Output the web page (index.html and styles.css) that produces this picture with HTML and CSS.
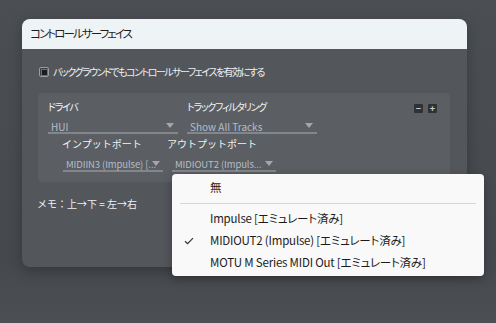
FILE: index.html
```html
<!DOCTYPE html>
<html lang="ja">
<head>
  <meta charset="UTF-8">
  <title>コントロールサーフェイス</title>
  <link rel="stylesheet" href="styles.css">
</head>
<body>
  <div class="window">
    <div class="titlebar">コントロールサーフェイス</div>
    <div class="content">
      <label class="check-row">
        <span class="checkbox"><span class="checkbox-mark"></span></span>
        バックグラウンドでもコントロールサーフェイスを有効にする
      </label>

      <div class="panel">
        <div class="panel-row">
          <div class="col col-driver">
            <div class="label tight">ドライバ</div>
            <div class="select select-wide"><span>HUI</span><i class="arrow"></i></div>
          </div>
          <div class="col col-filter">
            <div class="label tight">トラックフィルタリング</div>
            <div class="select select-wide"><span>Show All Tracks</span><i class="arrow"></i></div>
          </div>
          <div class="tools">
            <span class="tool">&minus;</span>
            <span class="tool">+</span>
          </div>
        </div>
        <div class="panel-row ports">
          <div class="col col-in">
            <div class="label">インプットポート</div>
            <div class="select select-port"><span>MIDIIN3 (Impulse) [...</span><i class="arrow"></i></div>
          </div>
          <div class="col col-out">
            <div class="label">アウトプットポート</div>
            <div class="select select-port"><span>MIDIOUT2 (Impuls...</span><i class="arrow"></i></div>
          </div>
        </div>
      </div>

      <div class="memo">メモ：上→下 = 左→右</div>
    </div>
  </div>

  <!-- open port menu -->
  <div class="menu">
    <div class="menu-item">無</div>
    <div class="menu-sep"></div>
    <div class="menu-item">Impulse [エミュレート済み]</div>
    <div class="menu-item checked">
      <svg class="tick" width="10" height="8" viewBox="0 0 10 8"><path d="M1 4.2 L3.6 6.6 L9 1.2" fill="none" stroke="#333" stroke-width="1.2"/></svg>
      MIDIOUT2 (Impulse) [エミュレート済み]
    </div>
    <div class="menu-item">MOTU M Series MIDI Out [エミュレート済み]</div>
  </div>
</body>
</html>
```

FILE: styles.css
```css
/* コントロールサーフェイス設定 */
html, body {
  height: 100%;
}
body {
  margin: 0;
  padding: 19px 0 0 22px;
  box-sizing: border-box;
  font-family: "Noto Sans CJK JP", "Noto Sans", sans-serif;
  font-feature-settings: "palt";
  background: linear-gradient(180deg, #4b4e53 0%, #45484d 80%, #4c4f54 100%);
  overflow: hidden;
}
.window {
  width: 445px;
  height: 248px;
  background-color: #53565b;
  border-radius: 8px;
  overflow: hidden;
  box-shadow: 0 4px 14px rgba(0, 0, 0, 0.25);
}
.titlebar {
  height: 30px;
  line-height: 29px;
  padding-left: 8px;
  background-color: #eef3f6;
  color: #1e1e1e;
  font-size: 11.5px;
  letter-spacing: -1.9px;
}
.content {
  padding: 18px 16px 0 16px;
}
.check-row {
  display: flex;
  align-items: center;
  gap: 4px;
  margin-left: 1px;
  color: #eef0f2;
  font-size: 10px;
  line-height: 10px;
  letter-spacing: -1.5px;
}
.checkbox {
  width: 8px;
  height: 8px;
  border: 1px solid #9a9ea3;
  border-radius: 2px;
  background-color: #3b3d41;
  display: flex;
  align-items: center;
  justify-content: center;
}
.checkbox-mark {
  width: 5px;
  height: 5px;
  background-color: #1c1d1f;
  border: 0.5px solid #6c7075;
}
.panel {
  margin-top: 16px;
  width: 412px;
  height: 89px;
  box-sizing: border-box;
  padding: 9px 0 0 10px;
  background-color: #5b5f63;
  border-radius: 4px;
}
.panel-row {
  display: flex;
  position: relative;
}
.col-driver {
  width: 139px;
}
.col-filter {
  width: 135px;
}
.label {
  color: #f1f2f3;
  font-size: 10px;
  line-height: 10px;
  height: 10px;
  white-space: nowrap;
  font-feature-settings: normal;
}
.label.tight {
  font-feature-settings: "palt";
  letter-spacing: -1.3px;
}
.select {
  position: relative;
  height: 16px;
  margin-top: 6px;
  border-bottom: 2px solid #83878c;
  color: #b3bdc8;
  font-size: 10px;
  line-height: 17px;
  padding-left: 3px;
  box-sizing: border-box;
  white-space: nowrap;
}
.select-wide {
  width: 130px;
}
.arrow {
  position: absolute;
  right: 4px;
  top: 5px;
  width: 0;
  height: 0;
  border-left: 4px solid transparent;
  border-right: 4px solid transparent;
  border-top: 5px solid #a3a7ac;
}
.tools {
  margin-left: auto;
  margin-right: 13px;
  margin-top: 2px;
  display: flex;
  gap: 5px;
  height: 9px;
}
.tool {
  width: 9px;
  height: 9px;
  background-color: #2f3134;
  border-radius: 1px;
  color: #c9ccd0;
  font-size: 9px;
  line-height: 9px;
  text-align: center;
  font-weight: bold;
}
.ports {
  margin-top: 5px;
}
.col-in {
  width: 105px;
  padding-left: 14px;
}
.col-in .select {
  margin-left: 1px;
}
.col-out {
  width: 110px;
}
.col-out .select {
  margin-left: 5px;
  width: 104px;
}
.ports .select {
  margin-top: 7px;
}
.select-port {
  width: 100px;
  font-size: 9.5px;
  letter-spacing: -0.1px;
}
.select-port .arrow {
  right: 3px;
}
.memo {
  margin-top: 14px;
  margin-left: -1px;
  color: #eef0f2;
  font-size: 10px;
  font-feature-settings: normal;
}
.menu {
  position: absolute;
  left: 172px;
  top: 174px;
  width: 312px;
  height: 102px;
  box-sizing: border-box;
  padding: 2px 8px 0 8px;
  background-color: #f9f9f9;
  border-radius: 4px;
  box-shadow: 0 3px 10px rgba(0, 0, 0, 0.3);
}
.menu-item {
  position: relative;
  height: 22px;
  line-height: 22px;
  padding-left: 30px;
  color: #1b1b1b;
  font-size: 11.5px;
  letter-spacing: -0.2px;
  white-space: nowrap;
}
.menu-sep {
  height: 1px;
  margin: 5px 0 3px 0;
  background-color: #d6d6d6;
}
.tick {
  position: absolute;
  left: 4px;
  top: 8px;
}
```
